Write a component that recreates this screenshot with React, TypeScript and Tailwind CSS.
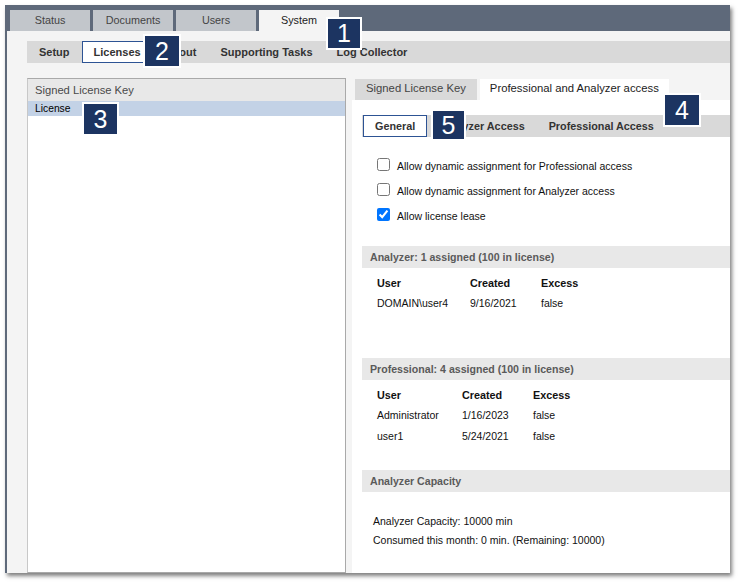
import React from "react";

const F = { fontFamily: '"Liberation Sans", Arial, sans-serif' };

function Badge({ n, cls }: { n: string; cls: string }) {
  return (
    <div
      className={`absolute flex items-center justify-center border-2 border-white bg-[#1c3461] text-[25px] leading-none text-white ${cls}`}
    >
      {n}
    </div>
  );
}

function Section({ title, children, h }: { title: string; children?: React.ReactNode; h: string }) {
  return (
    <div className="flex flex-col">
      <div className="flex h-[22px] items-center bg-[#e8e8e8] pl-[8px] pt-[1px] text-[10.6px] font-bold text-[#5a5a5a]">
        {title}
      </div>
      <div className={h}>{children}</div>
    </div>
  );
}

function UserTable({ rows, c1 }: { rows: string[][]; c1: string }) {
  return (
    <div className="mt-[4px] flex flex-col pl-[15px] text-[#111]">
      <div className="flex h-[21px] items-center pt-[1px] text-[10.8px] font-bold">
        <div className={c1}>User</div>
        <div className="w-[71px]">Created</div>
        <div>Excess</div>
      </div>
      {rows.map((r) => (
        <div key={r[0]} className="flex h-[21px] items-center pt-[1px] text-[10.5px]">
          <div className={c1}>{r[0]}</div>
          <div className="w-[71px]">{r[1]}</div>
          <div>{r[2]}</div>
        </div>
      ))}
    </div>
  );
}

export default function App() {
  const topTabs = ["Status", "Documents", "Users", "System"];
  const checks: [string, boolean][] = [
    ["Allow dynamic assignment for Professional access", false],
    ["Allow dynamic assignment for Analyzer access", false],
    ["Allow license lease", true],
  ];
  return (
    <div className="relative h-[582px] w-[739px] overflow-hidden bg-white" style={F}>
      <div className="ml-[5px] mt-[5px] flex h-[568px] w-[725px] flex-col border-l-2 border-[#5e697a] shadow-[2px_3px_4px_rgba(0,0,0,0.5)]">
        {/* top bar */}
        <div className="flex h-[26px] shrink-0 items-end gap-[3px] bg-[#5e697a] pl-[3px]">
          {topTabs.map((t) => (
            <div
              key={t}
              className={`flex h-[21px] w-[80px] items-center justify-center text-[10.8px] ${
                t === "System" ? "bg-[#f4f4f4] text-[#222]" : "bg-[#c2c6cb] text-[#444]"
              }`}
            >
              {t}
            </div>
          ))}
        </div>

        {/* content */}
        <div className="flex min-h-0 flex-1 flex-col bg-[#f4f4f4] pl-[20px] pt-[10px]">
          <div className="flex h-[22px] shrink-0 bg-[#d9d9d9] text-[11px] font-bold text-[#333]">
            <div className="flex items-center px-[12px]">Setup</div>
            <div className="flex items-center border border-[#2d5394] bg-white px-[11px]">Licenses</div>
            <div className="flex items-center px-[12px]">About</div>
            <div className="flex items-center px-[12px]">Supporting Tasks</div>
            <div className="flex items-center px-[12px]">Log Collector</div>
          </div>

          <div className="mt-[15px] flex min-h-0 flex-1 gap-[6px]">
            {/* left panel */}
            <div className="flex w-[319px] shrink-0 flex-col border border-[#a9a9a9] border-l-[#c8c8c8] bg-white">
              <div className="flex h-[22px] items-center bg-[#e8e8e8] pl-[7px] text-[11.2px] text-[#4a4a4a]">
                Signed License Key
              </div>
              <div className="h-[15px] bg-[#c3d2e6] pl-[7px] text-[10.3px] leading-[15px] text-black">License</div>
            </div>

            {/* right column */}
            <div className="flex min-w-0 flex-1 flex-col">
              <div className="flex h-[22px] shrink-0 gap-[3px] pl-[3px] pt-[1px] text-[11.3px]">
                <div className="flex items-center bg-[#d9d9d9] px-[11px] pb-[3px] text-[#444]">Signed License Key</div>
                <div className="flex items-center bg-white px-[10px] pb-[3px] text-[#222]">Professional and Analyzer access</div>
              </div>
              <div className="flex min-h-0 flex-1 flex-col overflow-hidden bg-white pl-[10px] pt-[15px]">
                <div className="flex h-[22px] shrink-0 bg-[#d9d9d9] pl-[1px] text-[10.8px] font-bold text-[#333]">
                  <div className="flex items-center border border-[#2d5394] bg-white px-[11px]">General</div>
                  <div className="flex items-center px-[12px]">Analyzer Access</div>
                  <div className="flex items-center px-[12px]">Professional Access</div>
                </div>

                <div className="flex flex-col pb-[19px] pl-[15px] pt-[15px]">
                  {checks.map(([label, on]) => (
                    <label key={label} className="flex h-[25px] items-center gap-[7px] text-[10.5px] text-[#111]">
                      <input type="checkbox" defaultChecked={on} className="h-[13px] w-[13px]" />
                      <span className="mt-[4px]">{label}</span>
                    </label>
                  ))}
                </div>

                <Section title="Analyzer: 1 assigned (100 in license)" h="h-[90px]">
                  <UserTable c1="w-[93px]" rows={[["DOMAIN\\user4", "9/16/2021", "false"]]} />
                </Section>
                <Section title="Professional: 4 assigned (100 in license)" h="h-[90px]">
                  <UserTable
                    c1="w-[85px]"
                    rows={[
                      ["Administrator", "1/16/2023", "false"],
                      ["user1", "5/24/2021", "false"],
                    ]}
                  />
                </Section>
                <Section title="Analyzer Capacity" h="">
                  <div className="flex flex-col pl-[11px] pt-[20px] text-[10.5px] leading-[19px] text-[#111]">
                    <div>Analyzer Capacity: 10000 min</div>
                    <div>Consumed this month: 0 min. (Remaining: 10000)</div>
                  </div>
                </Section>
              </div>
            </div>
          </div>
        </div>
      </div>

      <Badge n="1" cls="left-[326px] top-[17px] w-[36px] h-[33px]" />
      <Badge n="2" cls="left-[143px] top-[34px] w-[38px] h-[34px]" />
      <Badge n="3" cls="left-[82px] top-[102px] w-[37px] h-[34px]" />
      <Badge n="4" cls="left-[663px] top-[93px] w-[38px] h-[34px]" />
      <Badge n="5" cls="left-[431px] top-[109px] w-[35px] h-[32px]" />
    </div>
  );
}
